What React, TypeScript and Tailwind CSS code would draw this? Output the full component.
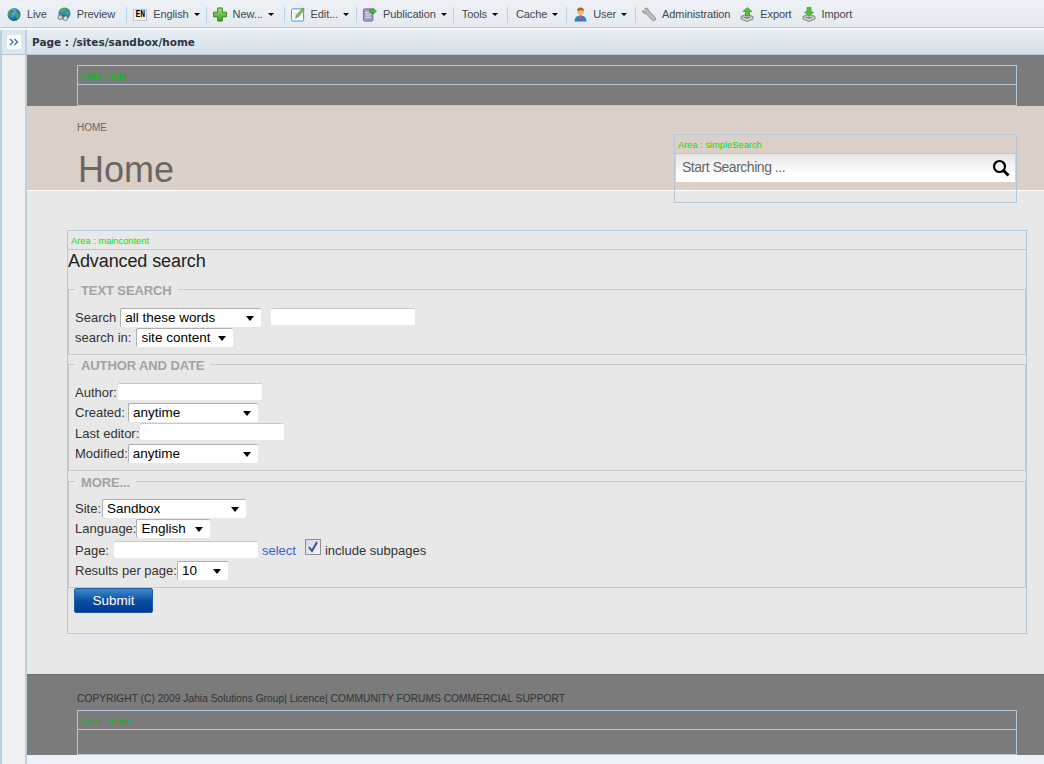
import React from 'react';

const Caret = ({ className = '' }: { className?: string }) => (
  <span className={`inline-block w-0 h-0 border-x-[3px] border-x-transparent border-t-[3px] border-t-black ${className}`} />
);

const Globe = () => (
  <svg width="15" height="15" viewBox="0 0 15 15">
    <defs>
      <radialGradient id="globeBlue" cx="0.35" cy="0.3" r="0.8">
        <stop offset="0" stopColor="#7cc4ee" />
        <stop offset="0.6" stopColor="#1d78b8" />
        <stop offset="1" stopColor="#0c4a80" />
      </radialGradient>
    </defs>
    <circle cx="7.5" cy="7.5" r="7" fill="url(#globeBlue)" />
    <path d="M3 3.5c2-1.5 4-1 4.500 0s-1 2-2 3-1 3-.5 4.500-1.500-.5-2.500-2.500-.5-4 .5-5z" fill="#3f9a3c" />
    <path d="M9.500 6c1.500-.5 3.500 0 4 1.500s-.5 3.500-2 5c-1 .5-1.500-1-1.500-2.500s-1.500-3.500-.5-4z" fill="#4aa544" />
  </svg>
);

const PreviewIcon = () => (
  <svg width="15" height="15" viewBox="0 0 15 15">
    <circle cx="8" cy="6.500" r="6.500" fill="#2f8fb0" />
    <path d="M3 3c2-2.500 6-3 7-1.500s-2 2-3 3-4 1-4-1.500zM10.500 4c1.500 0 3 1 3 3l-3.500 0c-.5-1 0-2 .5-3z" fill="#5aaa4a" />
    <circle cx="3.500" cy="10.500" r="2.500" fill="#cfcfcf" stroke="#666" strokeWidth="0.8" />
    <circle cx="9" cy="11.500" r="2.500" fill="#e0e0e0" stroke="#666" strokeWidth="0.8" />
    <path d="M5.500 8.500l3 .5" stroke="#555" strokeWidth="1.400" />
  </svg>
);

const LangBadge = () => (
  <span className="w-[14px] h-[12px] bg-[#f4f4f4] border border-[#c4c4c4] flex items-center justify-center text-[8px] leading-none font-bold text-black [font-family:'DejaVu_Sans_Mono',monospace]">
    EN
  </span>
);

const PlusIcon = () => (
  <svg width="15" height="15" viewBox="0 0 15 15">
    <defs>
      <linearGradient id="plusGreen" x1="0" y1="0" x2="0" y2="1">
        <stop offset="0" stopColor="#a4e67a" />
        <stop offset="1" stopColor="#3c9c22" />
      </linearGradient>
    </defs>
    <path d="M5 .5h5v4.500h4.500v5H10v4.500H5V10H.5V5H5z" fill="url(#plusGreen)" stroke="#2e7d1d" strokeWidth="1" />
  </svg>
);

const EditIcon = () => (
  <svg width="15" height="15" viewBox="0 0 15 15">
    <rect x="0.500" y="1.500" width="13" height="13" rx="1.500" fill="#fdfdfd" stroke="#2f93dc" />
    <path d="M3 6.500h5M3 9h4M3 11.500h3" stroke="#b9cfe0" strokeWidth="1" />
    <path d="M5 11l1-3 6-7 2 1.500-6 7.500z" fill="#7cc04a" stroke="#5d7a3a" strokeWidth="0.5" />
    <path d="M12 1l2 1.500 .7-1-1.800-1.500z" fill="#e0654f" />
  </svg>
);

const PublicationIcon = () => (
  <svg width="15" height="15" viewBox="0 0 15 15">
    <rect x="0.500" y="1.500" width="10" height="13" rx="1" fill="#a79fc9" stroke="#6b6590" />
    <path d="M2.500 5.500h6M2.500 8h6M2.500 10.500h6" stroke="#e8e6f2" strokeWidth="1" />
    <path d="M7 2.500h3.500V.5L14.500 4l-4 3.500v-2H7z" fill="#49bb3a" stroke="#2f7f26" strokeWidth="0.6" />
  </svg>
);

const UserIcon = () => (
  <svg width="13" height="15" viewBox="0 0 13 15">
    <path d="M.5 14.500c0-4 2.500-6 6-6s6 2 6 6z" fill="#2f7fd0" />
    <path d="M5.500 8.500h2l-.5 4h-1z" fill="#e2554a" />
    <circle cx="6.500" cy="4.500" r="3.300" fill="#f2b27a" />
    <path d="M3 4c0-2.500 1.500-3.500 3.500-3.500S10 1.500 10 4C8.500 3 5 3 3 4z" fill="#b4641e" />
  </svg>
);

const WrenchIcon = () => (
  <svg width="15" height="15" viewBox="0 0 15 15">
    <path d="M1 3l2 1.500L4.500 3 3 1c2-1 4 0 4 2.500l6.500 6.500c1.500 1 1.500 2.500.5 3.500s-2.500 1-3.500-.5L4.500 6.500C2 7 0 5 1 3z" fill="#bcbcbc" stroke="#777" strokeWidth="0.8" />
  </svg>
);

const TrayIcon = ({ up }: { up: boolean }) => (
  <svg width="14" height="15" viewBox="0 0 14 15">
    <path d="M1 9.500L7 7l6 2.500v2.500L7 14.500 1 12z" fill="#d4d4d4" stroke="#6f6f6f" strokeWidth="0.8" />
    <path d="M7 10L1 9.500 7 12l6-2.500z" fill="#8a8a8a" />
    {up ? (
      <path d="M7.500.5L12 4.500H9.500V9h-4V4.500H3z" fill="#4fc03c" stroke="#2d8a22" strokeWidth="0.6" />
    ) : (
      <path d="M5 .5h4v4.500h2.500L7 9.500 2.500 5H5z" fill="#4fc03c" stroke="#2d8a22" strokeWidth="0.6" />
    )}
  </svg>
);

const ToolSep = () => <span className="w-px h-[16px] bg-[#b4d4ee] ml-[7px] mr-[6px]" />;

const ToolItem = ({ icon, label, menu, className = '' }: any) => (
  <span className={`flex items-center ${className}`}>
    {icon && <span className="w-[14px] flex justify-center mr-[6px]">{icon}</span>}
    <span>{label}</span>
    {menu && <Caret className="ml-[5px]" />}
  </span>
);

const Area = ({ name, light, children, className = '' }: any) => (
  <div className={`border border-[#b4cadb] flex flex-col ${className}`}>
    <div className={`h-[19px] shrink-0 border-b border-[#b4cadb] pl-[3px] pt-[4px] flex items-center text-[9.300px] ${light ? 'text-[#00e600]' : 'text-[#00c000]'}`}>
      Area : {name}
    </div>
    {children}
  </div>
);

const Pick = ({ value, w, options }: { value: string; w: string; options?: string[] }) => (
  <span className={`relative inline-block h-[19px] ${w}`}>
    <select
      defaultValue={value}
      className="appearance-none w-full h-full bg-white border-t border-l border-[#b0b0b0] rounded-[2px] pl-[4px] text-[13.500px] leading-[17px] text-black outline-none"
    >
      {(options || [value]).map((o) => (
        <option key={o}>{o}</option>
      ))}
    </select>
    <span className="absolute right-[7px] top-[8px] w-0 h-0 border-x-[4.500px] border-x-transparent border-t-[5px] border-t-black" />
  </span>
);

const Field = ({ w }: { w: string }) => (
  <input type="text" className={`h-[17px] -mt-[2px] bg-white rounded-[2px] border-t border-[#c8c8c8] outline-none ${w}`} />
);

const Group = ({ title, children, className = '' }: any) => (
  <fieldset className={`border border-[#c8c8c8] pl-[6px] ${className}`}>
    <legend className="px-[6px] h-[16px] pt-[2px] text-[13px] leading-[16px] font-bold text-[#a3a3a3] tracking-[-0.1px]">{title}</legend>
    {children}
  </fieldset>
);

const Row = ({ children, className = '' }: any) => (
  <div className={`flex items-center h-[20px] text-[13px] text-[#333] [&>span:first-child]:pt-[2px] ${className}`}>{children}</div>
);

export default function App() {
  return (
    <div className="w-[1044px] h-[764px] overflow-hidden flex flex-col bg-[#eef3f9] text-[#333] [font-family:'Liberation_Sans',Arial,sans-serif]">
      {/* top toolbar */}
      <div className="h-[27px] shrink-0 bg-gradient-to-b from-[#eef2f6] to-[#e5eaef] flex items-center pl-[7px] pt-[2px] text-[11px] tracking-[-0.1px] text-[#3f4650]">
        <ToolItem icon={<Globe />} label="Live" />
        <ToolItem icon={<PreviewIcon />} label="Preview" className="ml-[10px] mr-[4px]" />
        <ToolSep />
        <ToolItem icon={<LangBadge />} label="English" menu className="-mr-px" />
        <ToolSep />
        <ToolItem icon={<PlusIcon />} label="New..." menu className="mr-[3px]" />
        <ToolSep />
        <ToolItem icon={<EditIcon />} label="Edit..." menu />
        <ToolSep />
        <ToolItem icon={<PublicationIcon />} label="Publication" menu className="-mr-px" />
        <ToolSep />
        <ToolItem label="Tools" menu className="ml-[2px] mr-[2px]" />
        <ToolSep />
        <ToolItem label="Cache" menu className="ml-[2px] mr-px" />
        <ToolSep />
        <ToolItem icon={<UserIcon />} label="User" menu className="mr-px" />
        <ToolSep />
        <ToolItem icon={<WrenchIcon />} label="Administration" />
        <ToolItem icon={<TrayIcon up />} label="Export" className="ml-[10px]" />
        <ToolItem icon={<TrayIcon up={false} />} label="Import" className="ml-[10px]" />
      </div>
      <div className="h-[3px] shrink-0 bg-[#f4f7fa] border-t border-[#b9c8d4]" />

      {/* page title bar */}
      <div className="h-[25px] shrink-0 flex bg-gradient-to-b from-[#e8eef3] to-[#d5e0e8] border-b border-[#b5c5d2]">
        <div className="w-[27px] flex items-center justify-center border-r-2 border-[#bccfdd] border-l-2 border-l-[#bccfdd] bg-[#dce6ed]">
          <span className="w-[14px] h-[14px] bg-white rounded-[2px] flex items-center justify-center">
            <svg width="10" height="8" viewBox="0 0 10 8" fill="none" stroke="#2a74d4" strokeWidth="1.400">
              <path d="M1 1l3 3-3 3M5.500 1l3 3-3 3" />
            </svg>
          </span>
        </div>
        <div className="pl-[5px] pt-[2px] flex items-center text-[10.500px] font-bold text-[#2b3544] [font-family:'DejaVu_Sans',sans-serif]">
          Page : /sites/sandbox/home
        </div>
      </div>

      <div className="flex-1 flex min-h-0">
        {/* collapsed side strip */}
        <div className="w-[27px] shrink-0 bg-[#f0f0f0] border-l-2 border-[#bccfdd] border-r-2 border-r-[#bccfdd]" />

        <div className="flex-1 min-w-0 flex flex-col">
          {/* logo band */}
          <div className="h-[51px] shrink-0 bg-[#7b7b7b] pt-[10px] pl-[50px]">
            <Area name="logo" className="w-[940px] h-[41px]" />
          </div>

          {/* page heading, the search area hangs over its bottom edge */}
          <div className="h-[85px] shrink-0 bg-[#dbd0c7] border-b border-white flex justify-between pl-[50px] pr-[27px] relative z-10">
            <div>
              <div className="pt-[16px] text-[10px] leading-[12px] text-[#6a6462] tracking-[-0.05px]">HOME</div>
              <h1 className="mt-[16px] pl-px text-[36px] leading-[40px] text-[#6b6563]">Home</h1>
            </div>
            <Area name="simpleSearch" light className="w-[343px] h-[69px] mt-[28px]">
              <div className="mx-px h-[28px] bg-gradient-to-b from-[#e4e4e4] to-white to-70% flex items-center justify-between pl-[6px] pr-[5px] pb-px text-[14px] tracking-[-0.47px] text-[#666]">
                <span>Start Searching ...</span>
                <svg width="18" height="18" viewBox="0 0 18 18" fill="none" stroke="#000" strokeWidth="2.200">
                  <circle cx="7.500" cy="7.500" r="5.500" />
                  <path d="M11.500 11.500l5 5" strokeWidth="3" />
                </svg>
              </div>
            </Area>
          </div>

          {/* main content */}
          <div className="h-[483px] shrink-0 bg-[#e8e8e8] pt-[39px] pl-[40px]">
            <Area name="maincontent" light className="w-[960px] h-[404px]">
              <h2 className="h-[23px] text-[18px] leading-[23px] tracking-[-0.1px] text-[#222]">Advanced search</h2>

              <Group title="TEXT SEARCH" className="mt-[8px] h-[74px]">
                <div className="pt-[10px]">
                  <Row>
                    <span className="mr-[4px]">Search</span>
                    <Pick value="all these words" w="w-[141px]" />
                    <Field w="w-[144px] ml-[10px]" />
                  </Row>
                  <Row>
                    <span className="mr-[5px]">search in:</span>
                    <Pick value="site content" w="w-[97px]" />
                  </Row>
                </div>
              </Group>

              <Group title="AUTHOR AND DATE" className="mt-px h-[115px]">
                <div className="pt-[10px]">
                  <Row>
                    <span className="mr-px">Author:</span>
                    <Field w="w-[144px]" />
                  </Row>
                  <Row>
                    <span className="mr-[3px]">Created:</span>
                    <Pick value="anytime" w="w-[130px]" />
                  </Row>
                  <Row className="h-[21px]">
                    <span className="mr-px">Last editor:</span>
                    <Field w="w-[144px]" />
                  </Row>
                  <Row>
                    <span>Modified:</span>
                    <Pick value="anytime" w="w-[130px]" />
                  </Row>
                </div>
              </Group>

              <Group title="MORE..." className="mt-[2px] h-[115px]">
                <div className="pt-[9px]">
                  <Row>
                    <span className="mr-px">Site:</span>
                    <Pick value="Sandbox" w="w-[144px]" />
                  </Row>
                  <Row>
                    <span>Language:</span>
                    <Pick value="English" w="w-[74px]" />
                  </Row>
                  <Row className="h-[22px] pt-[3px]">
                    <span className="mr-[5px] mb-[2px]">Page:</span>
                    <Field w="w-[144px]" />
                    <a className="ml-[4px] text-[#3a5fcd] cursor-pointer">select</a>
                    <span className="ml-[9px] w-[16px] h-[16px] border border-[#8f8f8f] bg-gradient-to-br from-[#d8d8e4] to-[#f4f4f8] flex items-center justify-center -mt-[7px]">
                      <svg width="12" height="12" viewBox="0 0 12 12" fill="none" stroke="#3b4f9c" strokeWidth="2">
                        <path d="M2 6l3 4 5-9" />
                      </svg>
                    </span>
                    <span className="ml-[4px]">include subpages</span>
                  </Row>
                  <Row>
                    <span>Results per page:</span>
                    <Pick value="10" w="w-[51px]" />
                  </Row>
                </div>
              </Group>

              <button className="ml-[6px] w-[79px] h-[25px] pt-px rounded-[2px] bg-gradient-to-b from-[#3d8cca] via-[#0d4fa3] to-[#003a96] border border-[#1c5ea8] text-white text-[13.500px]">
                Submit
              </button>
            </Area>
          </div>

          {/* footer band */}
          <div className="h-[81px] shrink-0 bg-[#7b7b7b] border-t border-[#6e6e6e] pt-[17px] pl-[50px]">
            <div className="h-[18px] text-[10.250px] leading-[14px] text-[#333]">
              COPYRIGHT (C) 2009 Jahia Solutions Group| Licence| COMMUNITY FORUMS COMMERCIAL SUPPORT
            </div>
            <Area name="footer" className="w-[940px] h-[45px]" />
          </div>
        </div>
      </div>
    </div>
  );
}
